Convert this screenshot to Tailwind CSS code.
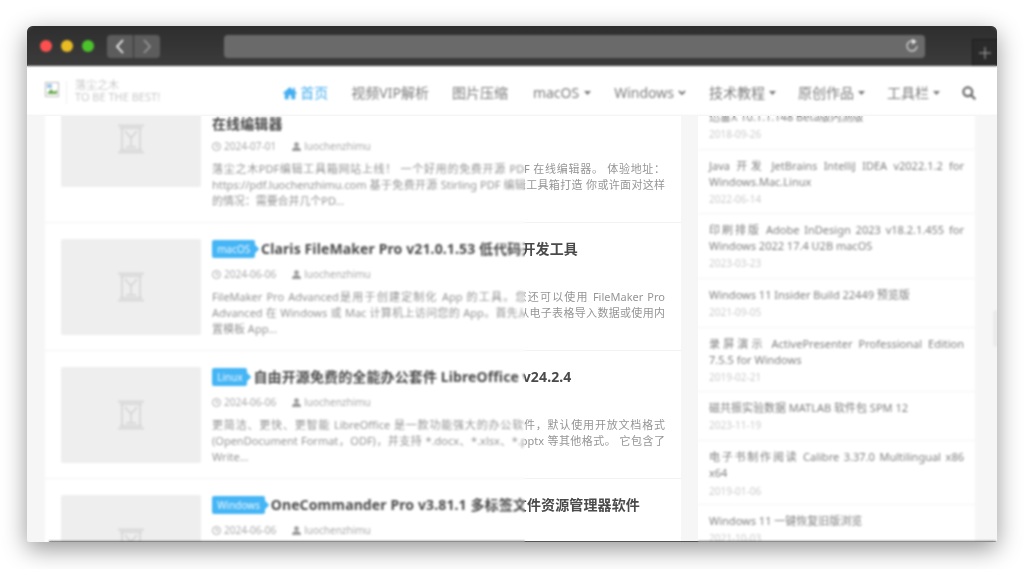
<!doctype html>
<html lang="zh-CN">
<head>
<meta charset="utf-8">
<script src="https://cdn.jsdelivr.net/npm/@tailwindcss/browser@4"></script>
<title>落尘之木</title>
</head>
<body class="bg-white overflow-hidden font-['Noto_Sans','Noto_Sans_CJK_SC',sans-serif]">
<div class="w-[1024px] h-[569px] pt-[26px] pl-[27px] overflow-hidden bg-white">
<div class="relative w-[970px] h-[516px] rounded-t-[6px] rounded-b-[3px] overflow-hidden flex flex-col bg-white shadow-[0_7px_24px_rgba(0,0,0,0.42)] blur-[0.4px]">

  <!-- browser chrome -->
  <div class="h-[40px] shrink-0 flex items-center pl-[13px] bg-gradient-to-b from-[#2e2e2e] to-[#3c3c3c] relative">
    <div class="flex gap-[9px]">
      <span class="w-[12px] h-[12px] rounded-full bg-[#fc5050]"></span>
      <span class="w-[12px] h-[12px] rounded-full bg-[#e9bc24]"></span>
      <span class="w-[12px] h-[12px] rounded-full bg-[#4cc22c]"></span>
    </div>
    <div class="flex gap-px ml-[13px]">
      <span class="w-[26px] h-[23px] rounded-l-[4px] bg-[#5c5c5c] flex items-center justify-center">
        <svg width="10" height="15" viewBox="0 0 10 15" fill="none" stroke="#fff" stroke-width="1.6"><path d="M8 1 2 7.5 8 14"/></svg>
      </span>
      <span class="w-[26px] h-[23px] rounded-r-[4px] bg-[#5c5c5c] flex items-center justify-center">
        <svg width="10" height="15" viewBox="0 0 10 15" fill="none" stroke="#9a9a9a" stroke-width="1.6"><path d="M2 1 8 7.5 2 14"/></svg>
      </span>
    </div>
    <div class="ml-[64px] w-[701px] h-[23px] rounded-[4px] bg-[#6a6a6a] flex items-center justify-end pr-[6px]">
      <svg width="14" height="14" viewBox="0 0 14 14" fill="none" stroke="#eee" stroke-width="1.1"><path d="M9.5 2.6A5 5 0 1 0 12 7"/><path d="M7.6 0.6 10.6 2.6 7.8 4.6Z" fill="#eee"/></svg>
    </div>
    <div class="absolute right-0 bottom-0 w-[25px] h-[27px] bg-[#2a2a2a] border-l border-t border-[#1c1c1c] flex items-center justify-center">
      <svg width="12" height="12" viewBox="0 0 12 12" stroke="#aaa" stroke-width="1"><path d="M6 0v12M0 6h12"/></svg>
    </div>
  </div>

  <!-- site header -->
  <header class="h-[50px] shrink-0 bg-white flex items-center pl-[18px] pr-[21px] relative z-10 border-b border-[#f0f0f0]">
    <svg class="mb-[3px]" width="14" height="15" viewBox="0 0 14 15"><rect x="0.5" y="0.5" width="13" height="14" fill="#fff" stroke="#bbb"/><path d="M2 12 6 7l3 3 3-2v4z" fill="#6aa84f"/><rect x="2" y="2" width="5" height="4" fill="#9ec5e8"/></svg>
    <span class="w-px h-[23px] bg-[#eeeeee] ml-[7px] mt-[4px]"></span>
    <div class="ml-[8px] text-[#c9c9c9] text-[11px] leading-[12px]">
      <div>落尘之木</div>
      <div class="whitespace-nowrap">TO BE THE BEST!</div>
    </div>
    <nav class="ml-auto flex items-center text-[14px] text-[#7d7d7d] whitespace-nowrap mt-[4px]">
      <a class="flex items-center gap-[3px] text-[#45aef0] w-[45px]">
        <svg width="16" height="14" viewBox="0 0 16 14" fill="#45aef0"><path d="M8 0 0 7l1 1 1-.8V14h4.500V9.500h3V14H14V7.200l1 .8 1-1-2.500-2.200V1h-2v3z"/></svg>首页</a>
      <a class="ml-[23px]">视频VIP解析</a>
      <a class="ml-[23px]">图片压缩</a>
      <a class="ml-[25px] flex items-center gap-[5px]">macOS<svg width="7" height="4" viewBox="0 0 7 4" fill="#777"><path d="M0 0h7L3.500 4z"/></svg></a>
      <a class="ml-[23px] flex items-center gap-[4px]">Windows<svg width="8" height="5" viewBox="0 0 8 5" fill="none" stroke="#555" stroke-width="1.500"><path d="M1 1l3 3 3-3"/></svg></a>
      <a class="ml-[23px] flex items-center gap-[4px]">技术教程<svg width="7" height="4" viewBox="0 0 7 4" fill="#777"><path d="M0 0h7L3.500 4z"/></svg></a>
      <a class="ml-[22px] flex items-center gap-[4px]">原创作品<svg width="7" height="4" viewBox="0 0 7 4" fill="#777"><path d="M0 0h7L3.500 4z"/></svg></a>
      <a class="ml-[22px] flex items-center gap-[4px]">工具栏<svg width="7" height="4" viewBox="0 0 7 4" fill="#777"><path d="M0 0h7L3.500 4z"/></svg></a>
      <svg class="ml-[22px]" width="14" height="14" viewBox="0 0 14 14" fill="none" stroke="#666" stroke-width="2.200"><circle cx="5.800" cy="5.800" r="4.400"/><path d="M9 9l4.300 4.300"/></svg>
    </nav>
  </header>

  <!-- page body -->
  <div class="flex-1 min-h-0 overflow-hidden bg-[#f6f6f6] flex items-start pl-[18px]">

    <!-- post list -->
    <main class="w-[636px] shrink-0 -mt-[41px] bg-white">
      <article class="h-[148px] flex gap-[11px] pl-[16px] pr-[16px] pt-[16px] border-b border-[#f3f3f3]">
        <div class="w-[140px] h-[96px] shrink-0 rounded-[2px] bg-[#eeeeee] flex items-center justify-center">
          <svg width="28" height="30" viewBox="0 0 28 30" fill="none" stroke="#d2d2d2" stroke-width="1.500"><path d="M1 1.500h26M3 4h22M1 28.500h26M3 26h22M5 4v22M23 4v22M8 7l6 7 6-7M14 14v8M9 23h10"/></svg>
        </div>
        <div class="min-w-0 flex-1">
          <h2 class="mt-[1px] text-[14px] leading-[21px] font-bold text-[#4a4a4a] tracking-[0.12px]">落尘之木 PDF 编辑工具箱<br>在线编辑器</h2>
          <div class="mt-[4px] flex items-center text-[10px] text-[#aaa] leading-[16px]">
            <svg class="mr-[3px]" width="9" height="9" viewBox="0 0 9 9" fill="none" stroke="#aaa"><circle cx="4.500" cy="4.500" r="4"/><path d="M4.500 2v2.800h2"/></svg>2024-07-01
            <svg class="ml-[16px] mr-[3px]" width="9" height="9" viewBox="0 0 9 9" fill="#999"><circle cx="4.500" cy="2.500" r="2.300"/><path d="M0 9c0-3 2-4 4.500-4S9 6 9 9z"/></svg>luochenzhimu
          </div>
          <p class="mt-[7px] text-[11px] leading-[16px] text-[#959595] text-justify tracking-[-0.07px]">落尘之木PDF编辑工具箱网站上线！ 一个好用的免费开源 PDF 在线编辑器。 体验地址：https://pdf.luochenzhimu.com 基于免费开源 Stirling PDF 编辑工具箱打造 你或许面对这样的情况：需要合并几个PD...</p>
        </div>
      </article>

      <article class="h-[128px] flex gap-[11px] pl-[16px] pr-[16px] pt-[16px] border-b border-[#f3f3f3]">
        <div class="w-[140px] h-[96px] shrink-0 rounded-[2px] bg-[#eeeeee] flex items-center justify-center">
          <svg width="28" height="30" viewBox="0 0 28 30" fill="none" stroke="#d2d2d2" stroke-width="1.500"><path d="M1 1.500h26M3 4h22M1 28.500h26M3 26h22M5 4v22M23 4v22M8 7l6 7 6-7M14 14v8M9 23h10"/></svg>
        </div>
        <div class="min-w-0 flex-1">
          <h2 class="flex items-center text-[14px] leading-[20px] font-bold text-[#4a4a4a] tracking-[0.12px]">
            <span class="relative mr-[6px] h-[18px] px-[5px] rounded-[2px] bg-[#45b5f5] text-white/85 font-normal text-[10px] leading-[18px] tracking-normal">macOS<span class="absolute -right-[3px] top-[6px] w-[6px] h-[6px] rotate-45 bg-[#45b5f5]"></span></span>
            Claris FileMaker Pro v21.0.1.53 低代码开发工具</h2>
          <div class="mt-[7px] flex items-center text-[10px] text-[#aaa] leading-[16px]">
            <svg class="mr-[3px]" width="9" height="9" viewBox="0 0 9 9" fill="none" stroke="#aaa"><circle cx="4.500" cy="4.500" r="4"/><path d="M4.500 2v2.800h2"/></svg>2024-06-06
            <svg class="ml-[16px] mr-[3px]" width="9" height="9" viewBox="0 0 9 9" fill="#999"><circle cx="4.500" cy="2.500" r="2.300"/><path d="M0 9c0-3 2-4 4.500-4S9 6 9 9z"/></svg>luochenzhimu
          </div>
          <p class="mt-[7px] text-[11px] leading-[16px] text-[#959595] text-justify">FileMaker Pro Advanced是用于创建定制化 App 的工具。您还可以使用 FileMaker Pro Advanced 在 Windows 或 Mac 计算机上访问您的 App。首先从电子表格导入数据或使用内置模板 App...</p>
        </div>
      </article>

      <article class="h-[128px] flex gap-[11px] pl-[16px] pr-[16px] pt-[16px] border-b border-[#f3f3f3]">
        <div class="w-[140px] h-[96px] shrink-0 rounded-[2px] bg-[#eeeeee] flex items-center justify-center">
          <svg width="28" height="30" viewBox="0 0 28 30" fill="none" stroke="#d2d2d2" stroke-width="1.500"><path d="M1 1.500h26M3 4h22M1 28.500h26M3 26h22M5 4v22M23 4v22M8 7l6 7 6-7M14 14v8M9 23h10"/></svg>
        </div>
        <div class="min-w-0 flex-1">
          <h2 class="flex items-center text-[14px] leading-[20px] font-bold text-[#4a4a4a] tracking-[0.12px]">
            <span class="relative mr-[6px] h-[18px] px-[5px] rounded-[2px] bg-[#45b5f5] text-white/85 font-normal text-[10px] leading-[18px] tracking-normal">Linux<span class="absolute -right-[3px] top-[6px] w-[6px] h-[6px] rotate-45 bg-[#45b5f5]"></span></span>
            自由开源免费的全能办公套件 LibreOffice v24.2.4</h2>
          <div class="mt-[7px] flex items-center text-[10px] text-[#aaa] leading-[16px]">
            <svg class="mr-[3px]" width="9" height="9" viewBox="0 0 9 9" fill="none" stroke="#aaa"><circle cx="4.500" cy="4.500" r="4"/><path d="M4.500 2v2.800h2"/></svg>2024-06-06
            <svg class="ml-[16px] mr-[3px]" width="9" height="9" viewBox="0 0 9 9" fill="#999"><circle cx="4.500" cy="2.500" r="2.300"/><path d="M0 9c0-3 2-4 4.500-4S9 6 9 9z"/></svg>luochenzhimu
          </div>
          <p class="mt-[7px] text-[11px] leading-[16px] text-[#959595] text-justify">更简洁、更快、更智能 LibreOffice 是一款功能强大的办公软件，默认使用开放文档格式 (OpenDocument Format，ODF)，并支持 *.docx、*.xlsx、*.pptx 等其他格式。 它包含了 Write...</p>
        </div>
      </article>

      <article class="h-[128px] flex gap-[11px] pl-[16px] pr-[16px] pt-[16px]">
        <div class="w-[140px] h-[96px] shrink-0 rounded-[2px] bg-[#eeeeee] flex items-center justify-center">
          <svg width="28" height="30" viewBox="0 0 28 30" fill="none" stroke="#d2d2d2" stroke-width="1.500"><path d="M1 1.500h26M3 4h22M1 28.500h26M3 26h22M5 4v22M23 4v22M8 7l6 7 6-7M14 14v8M9 23h10"/></svg>
        </div>
        <div class="min-w-0 flex-1">
          <h2 class="flex items-center text-[14px] leading-[20px] font-bold text-[#4a4a4a] tracking-[0.12px]">
            <span class="relative mr-[6px] h-[18px] px-[5px] rounded-[2px] bg-[#45b5f5] text-white/85 font-normal text-[10px] leading-[18px] tracking-normal">Windows<span class="absolute -right-[3px] top-[6px] w-[6px] h-[6px] rotate-45 bg-[#45b5f5]"></span></span>
            OneCommander Pro v3.81.1 多标签文件资源管理器软件</h2>
          <div class="mt-[7px] flex items-center text-[10px] text-[#aaa] leading-[16px]">
            <svg class="mr-[3px]" width="9" height="9" viewBox="0 0 9 9" fill="none" stroke="#aaa"><circle cx="4.500" cy="4.500" r="4"/><path d="M4.500 2v2.800h2"/></svg>2024-06-06
            <svg class="ml-[16px] mr-[3px]" width="9" height="9" viewBox="0 0 9 9" fill="#999"><circle cx="4.500" cy="2.500" r="2.300"/><path d="M0 9c0-3 2-4 4.500-4S9 6 9 9z"/></svg>luochenzhimu
          </div>
        </div>
      </article>
    </main>

    <!-- sidebar -->
    <aside class="w-[277px] shrink-0 ml-[17px] -mt-[17px] bg-white text-[11px] leading-[16px] text-[#808080]">
      <div class="h-[51px] px-[11px] pt-[10px] border-b border-[#f5f5f5]">
        <p class="whitespace-nowrap">迅雷X 10.1.1.148 Beta版内测版</p>
        <p class="mt-[1px] text-[10px] text-[#ccc]">2018-09-26</p>
      </div>
      <div class="h-[64px] px-[11px] pt-[8px] border-b border-[#f5f5f5]">
        <p class="text-justify">Java 开发 JetBrains IntelliJ IDEA v2022.1.2 for Windows.Mac.Linux</p>
        <p class="mt-[1px] text-[10px] text-[#ccc]">2022-06-14</p>
      </div>
      <div class="h-[65px] px-[11px] pt-[8px] border-b border-[#f5f5f5]">
        <p class="text-justify">印刷排版 Adobe InDesign 2023 v18.2.1.455 for Windows 2022 17.4 U2B macOS</p>
        <p class="mt-[1px] text-[10px] text-[#ccc]">2023-03-23</p>
      </div>
      <div class="h-[49px] px-[11px] pt-[8px] border-b border-[#f5f5f5]">
        <p>Windows 11 Insider Build 22449 预览版</p>
        <p class="mt-[1px] text-[10px] text-[#ccc]">2021-09-05</p>
      </div>
      <div class="h-[64px] px-[11px] pt-[8px] border-b border-[#f5f5f5]">
        <p class="text-justify">录屏演示 ActivePresenter Professional Edition 7.5.5 for Windows</p>
        <p class="mt-[1px] text-[10px] text-[#ccc]">2019-02-21</p>
      </div>
      <div class="h-[49px] px-[11px] pt-[8px] border-b border-[#f5f5f5]">
        <p>磁共振实验数据 MATLAB 软件包 SPM 12</p>
        <p class="mt-[1px] text-[10px] text-[#ccc]">2023-11-19</p>
      </div>
      <div class="h-[64px] px-[11px] pt-[8px] border-b border-[#f5f5f5]">
        <p class="text-justify">电子书制作阅读 Calibre 3.37.0 Multilingual x86 x64</p>
        <p class="mt-[2px] text-[10px] text-[#ccc]">2019-01-06</p>
      </div>
      <div class="h-[48px] px-[11px] pt-[8px]">
        <p>Windows 11 一键恢复旧版浏览</p>
        <p class="mt-[1px] text-[10px] text-[#ccc]">2021-10-03</p>
      </div>
    </aside>
  </div>

  <!-- scrollbar hint and lower edge -->
  <div class="absolute right-0 top-[284px] w-[4px] h-[37px] rounded-l-[3px] bg-[#ececec]"></div>
  <div class="absolute left-[22px] right-0 bottom-0 h-[1px] bg-[#555]"></div>

  <!-- frosted panes: everything but the strip from x=525 to x=698 is blurred harder -->
  <div class="absolute left-0 right-0 top-0 h-[90px] z-20 backdrop-blur-[1px]"></div>
  <div class="absolute left-0 top-[90px] bottom-0 w-[498px] z-20 backdrop-blur-[1px]"></div>
  <div class="absolute left-[671px] right-0 top-[90px] bottom-0 z-20 backdrop-blur-[1px]"></div>
</div>
</div>
</body>
</html>
